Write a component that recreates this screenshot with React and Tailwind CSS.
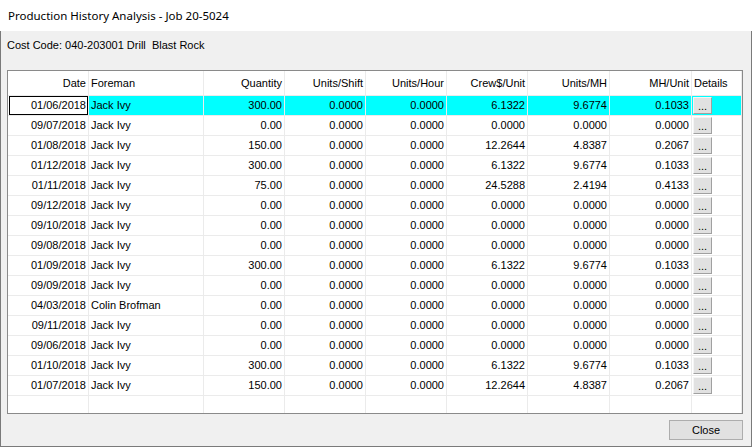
import React from "react";

const cols = [
  { w: "w-[81px]", label: "Date", align: "right" },
  { w: "w-[115px]", label: "Foreman", align: "left" },
  { w: "w-[81px]", label: "Quantity", align: "right" },
  { w: "w-[81px]", label: "Units/Shift", align: "right" },
  { w: "w-[81px]", label: "Units/Hour", align: "right" },
  { w: "w-[81px]", label: "Crew$/Unit", align: "right" },
  { w: "w-[82px]", label: "Units/MH", align: "right" },
  { w: "w-[82px]", label: "MH/Unit", align: "right" },
  { w: "w-[50px]", label: "Details", align: "left" },
];

const Z = ["0.0000", "0.0000", "0.0000", "0.0000", "0.0000"];
const rows = [
  ["01/06/2018", "Jack Ivy", "300.00", "0.0000", "0.0000", "6.1322", "9.6774", "0.1033"],
  ["09/07/2018", "Jack Ivy", "0.00", ...Z],
  ["01/08/2018", "Jack Ivy", "150.00", "0.0000", "0.0000", "12.2644", "4.8387", "0.2067"],
  ["01/12/2018", "Jack Ivy", "300.00", "0.0000", "0.0000", "6.1322", "9.6774", "0.1033"],
  ["01/11/2018", "Jack Ivy", "75.00", "0.0000", "0.0000", "24.5288", "2.4194", "0.4133"],
  ["09/12/2018", "Jack Ivy", "0.00", ...Z],
  ["09/10/2018", "Jack Ivy", "0.00", ...Z],
  ["09/08/2018", "Jack Ivy", "0.00", ...Z],
  ["01/09/2018", "Jack Ivy", "300.00", "0.0000", "0.0000", "6.1322", "9.6774", "0.1033"],
  ["09/09/2018", "Jack Ivy", "0.00", ...Z],
  ["04/03/2018", "Colin Brofman", "0.00", ...Z],
  ["09/11/2018", "Jack Ivy", "0.00", ...Z],
  ["09/06/2018", "Jack Ivy", "0.00", ...Z],
  ["01/10/2018", "Jack Ivy", "300.00", "0.0000", "0.0000", "6.1322", "9.6774", "0.1033"],
  ["01/07/2018", "Jack Ivy", "150.00", "0.0000", "0.0000", "12.2644", "4.8387", "0.2067"],
];

function DotsButton() {
  return (
    <div className="w-[19px] h-[17px] mt-[1px] ml-[1px] bg-[#e1e1e1] border border-t-[#f4f4f4] border-l-[#f4f4f4] border-r-[#a0a0a0] border-b-[#a0a0a0] flex items-end justify-center leading-[11px] text-[11px] pb-[1px]">
      ...
    </div>
  );
}

export default function App() {
  return (
    <div
      className="w-[752px] h-[447px] flex flex-col bg-white text-black text-[11px] overflow-hidden"
      style={{ fontFamily: '"Liberation Sans", Arial, sans-serif' }}
    >
      <div
        className="h-[31px] flex items-center pl-[8px] bg-white text-[11.5px]"
        style={{ fontFamily: '"Noto Sans", sans-serif' }}
      >
        Production History Analysis - Job 20-5024
      </div>
      <div className="flex-1 flex flex-col bg-[#f0f0f0] border-x border-b border-[#7a7a7a] pl-[6px] pr-[8px]">
        <div className="pt-[6px] h-[22px] leading-[16px]">Cost Code: 040-203001 Drill&nbsp; Blast Rock</div>
        <div className="mt-[17px] h-[344px] w-[736px] border border-[#8a8a8a] bg-white flex flex-col">
          <div className="flex h-[25px] border-b border-[#ebebeb]">
            {cols.map((c, i) => (
              <div
                key={i}
                className={`${c.w} h-full border-r border-[#ebebeb] flex items-center px-[2px] ${
                  c.align === "right" ? "justify-end" : "justify-start"
                }`}
              >
                {c.label}
              </div>
            ))}
          </div>
          {rows.map((r, ri) => {
            const sel = ri === 0;
            return (
              <div key={ri} className={`flex h-[20px] border-b border-[#ebebeb]`}>
                {cols.map((c, ci) => {
                  if (ci === 8) {
                    return (
                      <div key={ci} className={`${c.w} h-full border-r border-[#ebebeb] ${sel ? "bg-[#00ffff]" : ""}`}>
                        <DotsButton />
                      </div>
                    );
                  }
                  if (ci === 0 && sel) {
                    return (
                      <div key={ci} className={`${c.w} h-full border-r border-[#ebebeb] pl-[1px]`}>
                        <div className="h-full border border-black flex items-center justify-end pr-[1px]">
                          {r[ci]}
                        </div>
                      </div>
                    );
                  }
                  return (
                    <div
                      key={ci}
                      className={`${c.w} h-full border-r border-[#ebebeb] flex items-center px-[2px] whitespace-nowrap ${
                        c.align === "right" ? "justify-end" : "justify-start"
                      } ${sel ? "bg-[#00ffff]" : ""}`}
                    >
                      {r[ci]}
                    </div>
                  );
                })}
              </div>
            );
          })}
          <div className="flex flex-1">
            {cols.map((c, i) => (
              <div key={i} className={`${c.w} h-full border-r border-[#ebebeb]`} />
            ))}
          </div>
        </div>
        <div className="flex justify-end mt-[6px]">
          <div className="w-[74px] h-[20px] bg-[#e1e1e1] border border-[#adadad] flex items-center justify-center">
            Close
          </div>
        </div>
      </div>
    </div>
  );
}
